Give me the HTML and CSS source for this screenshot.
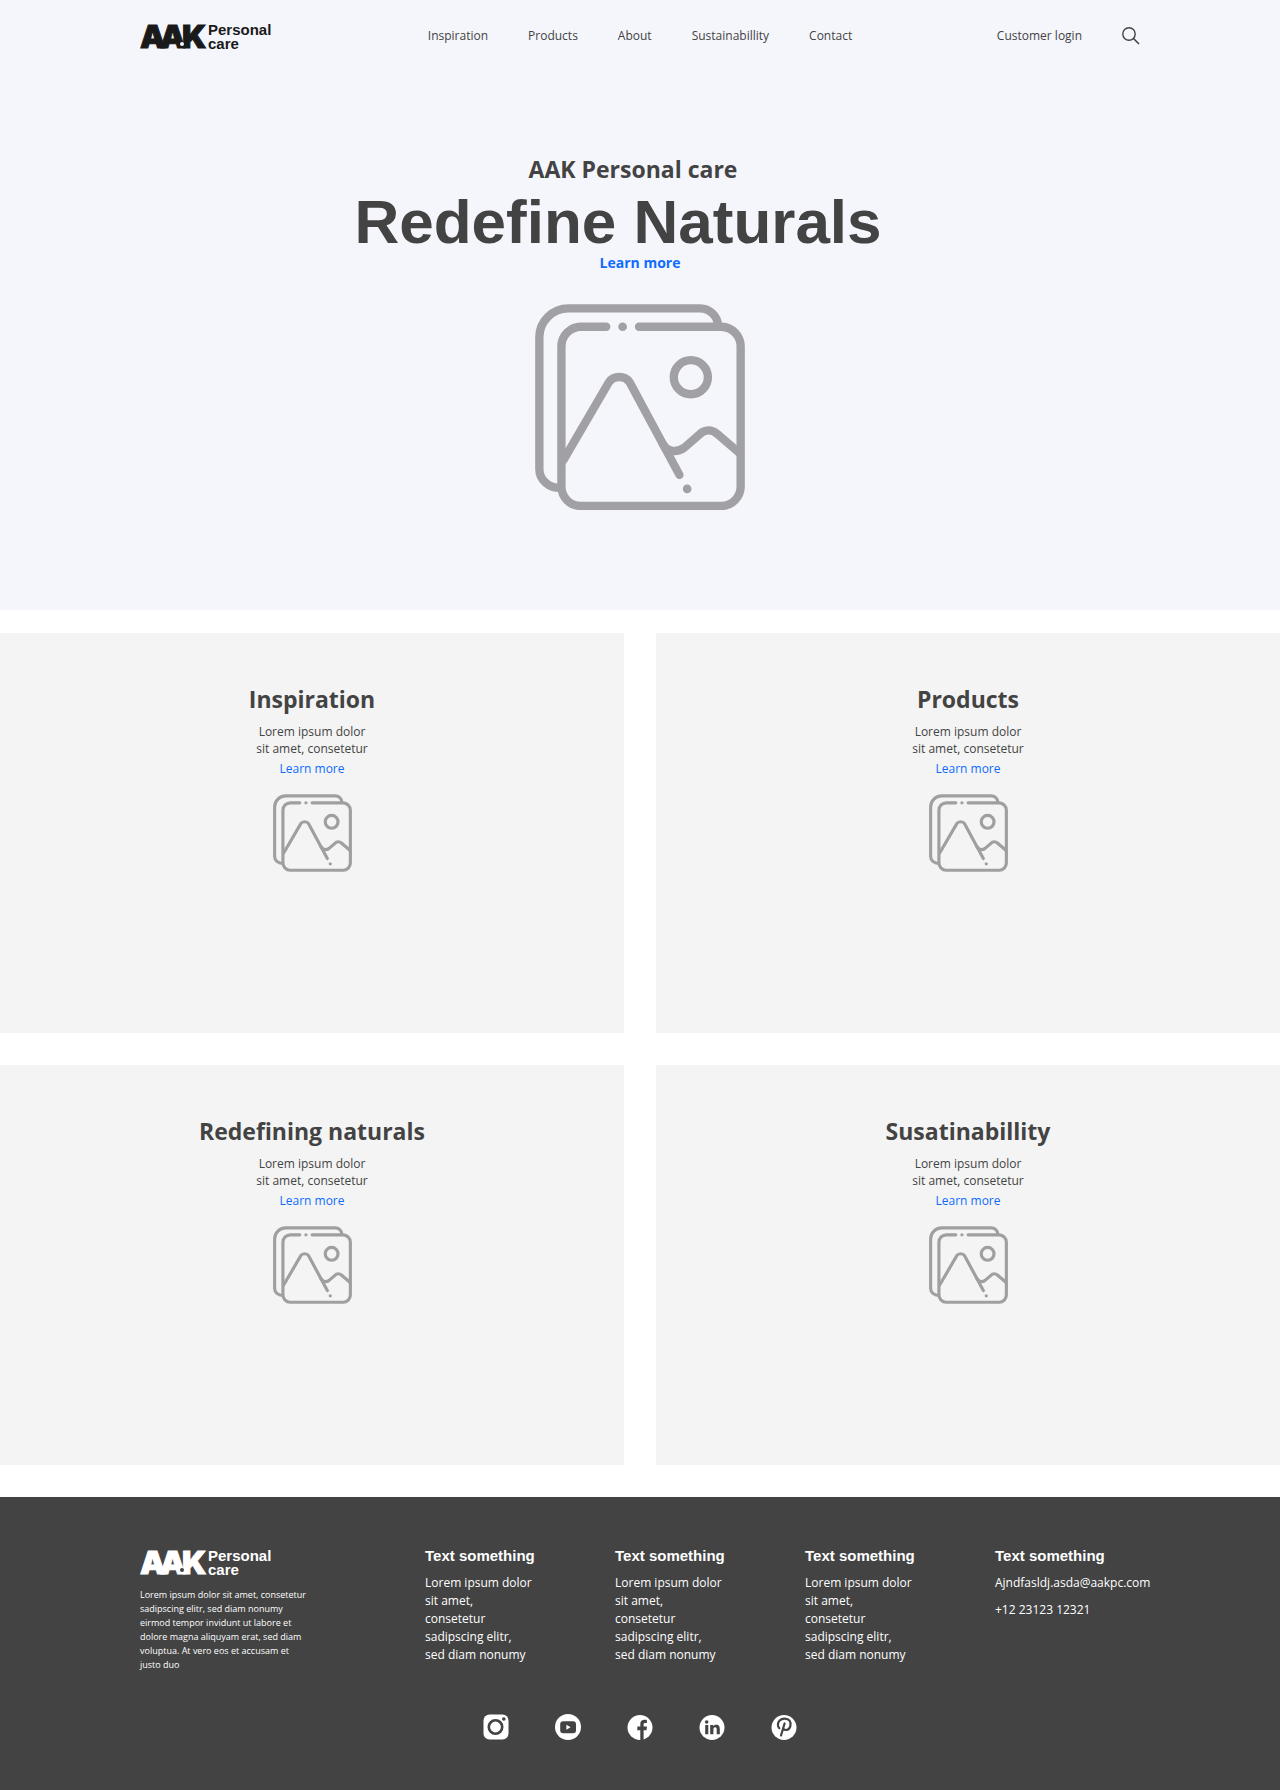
FILE: index.html
```html
<!DOCTYPE html>
<html lang="en">
<head>
<meta charset="utf-8">
<meta name="viewport" content="width=device-width, initial-scale=1">
<title>AAK Personal care</title>
<link rel="stylesheet" href="styles.css">
</head>
<body>
<svg class="sprite" aria-hidden="true">
  <symbol id="pictures" viewBox="46 44 628 616">
    <g fill="none" stroke="currentColor" stroke-width="25" stroke-linecap="round">
      <path stroke-linecap="butt" d="M122 594A62 56 0 0 1 59 538V144A87 87 0 0 1 147 57H540A54 52 0 0 1 593 106"/>
      <path d="M259 112H184A59 59 0 0 0 125 171V590A58 58 0 0 0 184 648H604A58 58 0 0 0 661 590V171A59 59 0 0 0 604 112H357"/>
      <path d="M131 511L267 278C281 257 315 257 329 278L478 555"/>
      <path d="M428 462C444 489 472 488 492 474L538 434C553 418 575 418 590 432L657 489"/>
      <circle cx="512" cy="263" r="51"/>
    </g>
    <circle cx="308" cy="112" r="13" fill="currentColor"/>
    <circle cx="501" cy="597" r="13" fill="currentColor"/>
  </symbol>
</svg>

<div class="hero">
  <header class="header container">
    <a class="logo" href="#"><svg class="logo-mark" viewBox="0 0 66 28"><text class="mark-text" x="0 20 42" y="25">AAK</text><circle class="mark-dot" cx="42" cy="21" r="2"/></svg><span class="logo-name">Personal<br>care</span></a>
    <nav class="nav" aria-label="Main">
      <a href="#">Inspiration</a>
      <a href="#">Products</a>
      <a href="#">About</a>
      <a href="#">Sustainabillity</a>
      <a href="#">Contact</a>
    </nav>
    <div class="tools">
      <a href="#">Customer login</a>
      <button class="search" type="button" aria-label="Search">
        <svg viewBox="0 0 18 18" width="18" height="18" fill="none" stroke="currentColor"><circle cx="7" cy="7" r="6.2" stroke-width="1.4"/><path d="M11.5 11.5L17 17" stroke-width="1.6"/></svg>
      </button>
    </div>
  </header>
  <section class="intro">
    <p class="intro-kicker">AAK Personal care</p>
    <h1 class="intro-title">Redefine Naturals</h1>
    <a class="intro-link" href="#">Learn more</a>
    <svg class="intro-picture" aria-hidden="true"><use href="#pictures"/></svg>
  </section>
</div>

<main class="cards">
  <section class="card">
    <h2>Inspiration</h2>
    <p>Lorem ipsum dolor<br>sit amet, consetetur</p>
    <a href="#">Learn more</a>
    <svg class="card-picture" aria-hidden="true"><use href="#pictures"/></svg>
  </section>
  <section class="card">
    <h2>Products</h2>
    <p>Lorem ipsum dolor<br>sit amet, consetetur</p>
    <a href="#">Learn more</a>
    <svg class="card-picture" aria-hidden="true"><use href="#pictures"/></svg>
  </section>
  <section class="card">
    <h2>Redefining naturals</h2>
    <p>Lorem ipsum dolor<br>sit amet, consetetur</p>
    <a href="#">Learn more</a>
    <svg class="card-picture" aria-hidden="true"><use href="#pictures"/></svg>
  </section>
  <section class="card">
    <h2>Susatinabillity</h2>
    <p>Lorem ipsum dolor<br>sit amet, consetetur</p>
    <a href="#">Learn more</a>
    <svg class="card-picture" aria-hidden="true"><use href="#pictures"/></svg>
  </section>
</main>

<footer class="footer">
  <div class="footer-columns container">
    <div class="footer-about">
      <a class="logo" href="#"><svg class="logo-mark" viewBox="0 0 66 28"><text class="mark-text" x="0 20 42" y="25">AAK</text><circle class="mark-dot" cx="42" cy="21" r="2"/></svg><span class="logo-name">Personal<br>care</span></a>
      <p>Lorem ipsum dolor sit amet, consetetur sadipscing elitr, sed diam nonumy eirmod tempor invidunt ut labore et dolore magna aliquyam erat, sed diam voluptua. At vero eos et accusam et justo duo</p>
    </div>
    <section class="footer-column">
      <h3>Text something</h3>
      <p>Lorem ipsum dolor sit amet, consetetur sadipscing elitr, sed diam nonumy</p>
    </section>
    <section class="footer-column">
      <h3>Text something</h3>
      <p>Lorem ipsum dolor sit amet, consetetur sadipscing elitr, sed diam nonumy</p>
    </section>
    <section class="footer-column">
      <h3>Text something</h3>
      <p>Lorem ipsum dolor sit amet, consetetur sadipscing elitr, sed diam nonumy</p>
    </section>
    <section class="footer-column">
      <h3>Text something</h3>
      <a href="mailto:Ajndfasldj.asda@aakpc.com">Ajndfasldj.asda@aakpc.com</a>
      <a href="tel:+122312312321">+12 23123 12321</a>
    </section>
  </div>
  <nav class="social" aria-label="Social media">
    <a href="#" aria-label="Instagram"><svg viewBox="0 0 26 26"><rect x="0.500" y="0.500" width="25" height="25" rx="6" fill="#fff"/><circle cx="12.500" cy="13" r="6.700" fill="none" stroke="#434343" stroke-width="2.600"/><circle cx="20.800" cy="5" r="1.800" fill="#434343"/></svg></a>
    <a href="#" aria-label="YouTube"><svg viewBox="0 0 26 26"><circle cx="13" cy="13" r="13" fill="#fff"/><rect x="5.200" y="7.300" width="15.800" height="12" rx="3" fill="#434343"/><path d="M11.400 10.800v5l4.200-2.500z" fill="#fff"/></svg></a>
    <a href="#" aria-label="Facebook"><svg viewBox="0 0 26 26"><circle cx="13" cy="13.500" r="12.500" fill="#fff"/><path d="M13.300 26v-9.700h-3v-3.800h3V10c0-3 1.800-4.300 4.300-4.300 1.100 0 1.900.1 2.300.2v3h-1.700c-1.300 0-1.600.7-1.600 1.600v2h3.400l-.5 3.800h-2.900V26z" fill="#434343"/></svg></a>
    <a href="#" aria-label="LinkedIn"><svg viewBox="0 0 26 26"><circle cx="13" cy="13.500" r="12.500" fill="#fff"/><g fill="#434343"><circle cx="7.700" cy="8" r="1.800"/><path d="M6.200 11h3.100v9.200H6.200zM11.200 11h3v1.300c.5-.9 1.600-1.600 3-1.600 3 0 3.600 2 3.600 4.500v5h-3.100v-4.500c0-1.100 0-2.400-1.500-2.400s-1.800 1.100-1.800 2.400v4.500h-3.200z"/></g></svg></a>
    <a href="#" aria-label="Pinterest"><svg viewBox="0 0 26 26"><circle cx="13" cy="13.500" r="12.500" fill="#fff"/><path d="M8.300 14.200C6.500 12.400 6.300 9 8.600 6.600 11.100 4 16.300 3.700 18.600 6.700c2.100 2.900.9 9-3.400 9.300-1.200.1-2.100-.5-2.600-1.200M13.600 9.500L10 21.500" fill="none" stroke="#434343" stroke-width="2.200" stroke-linecap="round"/></svg></a>
  </nav>
</footer>
</body>
</html>
```

FILE: styles.css
```css
* {
  box-sizing: border-box;
}

body {
  margin: 0;
  background: #fff;
  color: #434343;
  font: 12px/17px "Open Sans", "Noto Sans", sans-serif;
}

h1, h2, h3, p {
  margin: 0;
}

a {
  color: inherit;
  text-decoration: none;
}

svg {
  display: block;
}

.sprite {
  position: absolute;
  width: 0;
  height: 0;
}

.container {
  width: 100%;
  max-width: 1048px;
  margin: 0 auto;
  padding: 0 24px;
}

/* Hero */

.hero {
  --surface: #f4f6fc;
  padding-bottom: 100px;
  background: var(--surface);
}

.header {
  display: grid;
  grid-template-columns: 1fr auto 1fr;
  align-items: center;
  height: 71px;
}

.header .logo {
  padding-top: 3px;
}

.nav,
.tools {
  display: flex;
  align-items: center;
  gap: 40px;
}

.tools {
  justify-content: flex-end;
}

.search {
  padding: 0;
  border: 0;
  background: none;
  color: inherit;
  cursor: pointer;
}

.logo {
  display: flex;
  gap: 2px;
  color: #1a1a1a;
}

.logo-mark {
  width: 66px;
  height: 28px;
  overflow: visible;
}

.mark-text {
  fill: currentColor;
  stroke: currentColor;
  stroke-width: 1px;
  font: 900 32px Inter, sans-serif;
}

.mark-dot {
  fill: var(--surface);
}

.logo-name {
  font: bold 15px/14px "Liberation Sans", Arial, sans-serif;
}

.intro {
  display: flex;
  flex-direction: column;
  align-items: center;
  padding-top: 80px;
  text-align: center;
}

.intro-kicker {
  margin-bottom: 2px;
  padding-right: 14px;
  font-size: 23px;
  font-weight: 700;
  line-height: 36px;
}

.intro-title {
  padding-right: 44px;
  font: bold 62px/66px "Liberation Sans", Arial, sans-serif;
}

.intro-link {
  color: #0f6bff;
  font-size: 14px;
  font-weight: 700;
  line-height: 15px;
}

.intro-picture {
  width: 210px;
  height: 206px;
  margin-top: 34px;
  color: #a1a0a5;
}

/* Cards */

.cards {
  display: grid;
  grid-template-columns: 1fr 1fr;
  gap: 32px;
  padding: 23px 0 32px;
}

.card {
  display: flex;
  flex-direction: column;
  align-items: center;
  min-height: 400px;
  padding: 48px 24px;
  background: #f4f4f4;
  text-align: center;
}

.card h2 {
  margin-bottom: 6px;
  font-size: 23px;
  font-weight: 700;
  line-height: 36px;
}

.card a {
  margin-top: 3px;
  color: #0f6bff;
}

.card-picture {
  width: 79px;
  height: 78px;
  margin-top: 17px;
  color: #9f9f9f;
}

/* Footer */

.footer {
  --surface: #434343;
  padding: 52px 0 50px;
  background: var(--surface);
  color: #fff;
}

.footer .logo {
  color: #fff;
}

.footer-columns {
  display: grid;
  grid-template-columns: 1fr 110px 110px 110px 145px;
  gap: 80px;
}

.footer-about p {
  max-width: 170px;
  margin-top: 11px;
  font-size: 9px;
  line-height: 14px;
}

.footer-column {
  display: flex;
  flex-direction: column;
  line-height: 18px;
}

.footer-column h3 {
  margin-bottom: 11px;
  font: bold 15px/14px "Liberation Sans", Arial, sans-serif;
}

.footer-column p {
  max-width: 108px;
}

.footer-column a {
  margin-bottom: 9px;
  white-space: nowrap;
}

.social {
  display: flex;
  justify-content: center;
  gap: 46px;
  margin-top: 42px;
}

.social svg {
  width: 26px;
  height: 26px;
}
```
